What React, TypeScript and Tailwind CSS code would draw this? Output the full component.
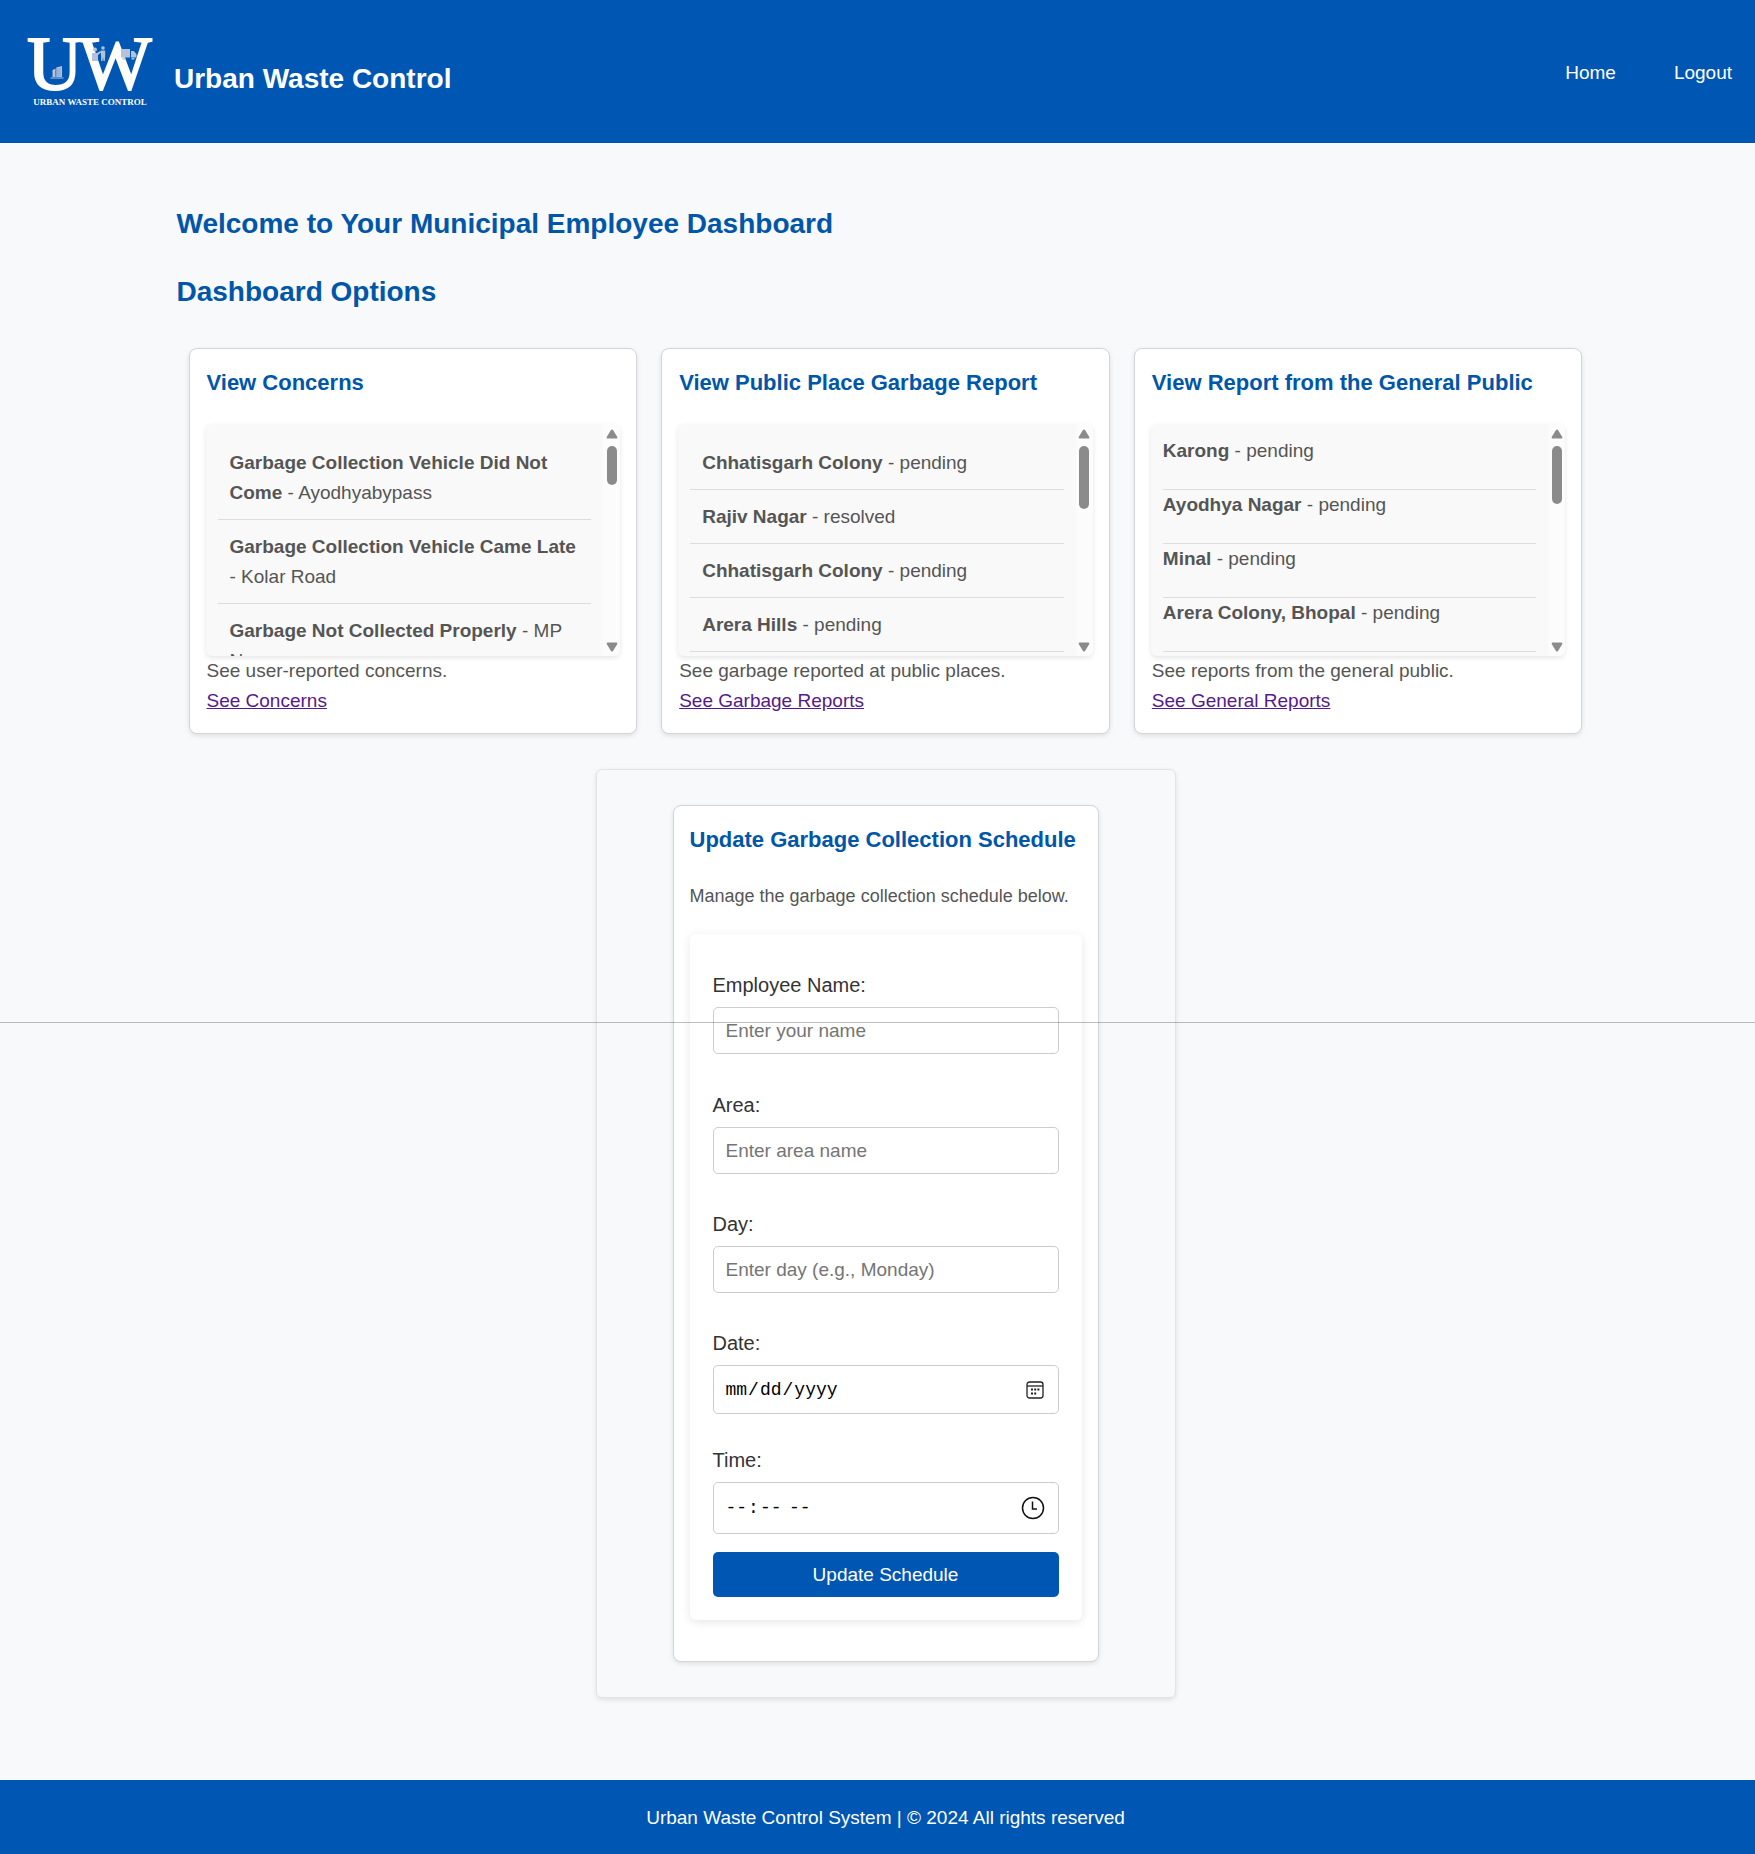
import React from "react";

type Item = { name: string; detail: string };

type Report = {
  title: string;
  items: Item[];
  inset: boolean;
  thumb: string;
  note: string;
  link: string;
};

const reports: Report[] = [
  {
    title: "View Concerns",
    items: [
      { name: "Garbage Collection Vehicle Did Not Come", detail: "Ayodhyabypass" },
      { name: "Garbage Collection Vehicle Came Late", detail: "Kolar Road" },
      { name: "Garbage Not Collected Properly", detail: "MP Nagar" },
    ],
    inset: true,
    thumb: "h-[39px]",
    note: "See user-reported concerns.",
    link: "See Concerns",
  },
  {
    title: "View Public Place Garbage Report",
    items: [
      { name: "Chhatisgarh Colony", detail: "pending" },
      { name: "Rajiv Nagar", detail: "resolved" },
      { name: "Chhatisgarh Colony", detail: "pending" },
      { name: "Arera Hills", detail: "pending" },
    ],
    inset: true,
    thumb: "h-[63px]",
    note: "See garbage reported at public places.",
    link: "See Garbage Reports",
  },
  {
    title: "View Report from the General Public",
    items: [
      { name: "Karong", detail: "pending" },
      { name: "Ayodhya Nagar", detail: "pending" },
      { name: "Minal", detail: "pending" },
      { name: "Arera Colony, Bhopal", detail: "pending" },
    ],
    inset: false,
    thumb: "h-[58px]",
    note: "See reports from the general public.",
    link: "See General Reports",
  },
];

function Logo() {
  return (
    <svg width="140" height="140" viewBox="0 0 140 140" role="img" aria-label="Urban Waste Control logo" className="shrink-0">
      <g fill="#fffdf8" stroke="#fffdf8" fontFamily="'Liberation Serif', serif">
        <text x="9" y="87" fontSize="77" strokeWidth="1.800">U</text>
        <text x="61" y="87" fontSize="77" strokeWidth="1.800">W</text>
        <text x="72" y="103" fontSize="9" strokeWidth="0" fontWeight="700" textAnchor="middle">
          URBAN WASTE CONTROL
        </text>
      </g>
      <g fill="#b4c3da">
        <path d="M34.500 68l3-1.500V75h-3zM38.300 65.500l5.700-1.500v11h-5.700zM32.500 75.400h13v1h-13z" />
        <path d="M40 66.500v8M42 66v8.500" stroke="#5f8cc8" strokeWidth="0.600" />
        <circle cx="77" cy="47.500" r="2" />
        <path d="M74 51h5l3.500-2 .8 1.200L80 53v6h-6z" />
        <circle cx="85" cy="46" r="1.800" />
        <path d="M82.800 48.500h4.400v5L86.800 59h-1.300l-.5-4-.5 4h-1.300z" />
        <path d="M103 47h9v8.500h-9zM113 49h2.800l2.700 3.300v3.200H113zM104.500 56h3v1.500h-3zM113.500 56h3v1.500h-3z" />
      </g>
    </svg>
  );
}

function ReportCard({ title, items, inset, thumb, note, link }: Report) {
  return (
    <article className="rounded-lg border border-[#d3d5d8] bg-white p-[17px] shadow-[0_2px_5px_rgba(0,0,0,0.1)]">
      <h3 className="mb-6 text-[22px] leading-[34px] font-bold text-[#0056a8]">{title}</h3>
      <div className="-mx-px flex h-[232px] overflow-hidden rounded-md bg-[#f9f9f9] shadow-[0_2px_5px_rgba(0,0,0,0.1)]">
        <ul className="min-w-0 flex-1 overflow-y-auto p-3 [scrollbar-width:none]">
          {items.map((item, i) => (
            <li
              key={i}
              className={inset ? "border-b border-[#dddddd] px-3 pt-3 pb-[11px]" : "border-b border-[#dddddd] pb-[23px]"}
            >
              <strong>{item.name}</strong> - {item.detail}
            </li>
          ))}
        </ul>
        <div aria-hidden="true" className="flex w-[17px] flex-col items-center bg-[#fcfcfc] pt-[5px] pb-1">
          <svg width="12" height="10" viewBox="0 0 12 10" fill="#8b8b8b">
            <path d="M6 0.500Q6.600 0.500 7 1L11.300 8Q11.600 9.500 10.500 9.500H1.500Q0.400 9.500 0.700 8L5 1Q5.400 0.500 6 0.500Z" />
          </svg>
          <div className={`mt-[7px] w-[10px] rounded-full bg-[#8b8b8b] ${thumb}`} />
          <svg width="12" height="10" viewBox="0 0 12 10" fill="#8b8b8b" className="mt-auto">
            <path d="M6 9.500Q6.600 9.500 7 9L11.300 2Q11.600 0.500 10.500 0.500H1.500Q0.400 0.500 0.700 2L5 9Q5.400 9.500 6 9.500Z" />
          </svg>
        </div>
      </div>
      <p>{note}</p>
      <a href="#" className="text-[#551a8b] underline">{link}</a>
    </article>
  );
}

const labelClass = "mb-[6px] block text-[20px] leading-8 text-[#333333]";
const inputClass =
  "block h-[47px] w-full rounded-[5px] border border-[#cccccc] bg-white px-3 text-[19px] placeholder:text-[#757575]";
const pickerClass =
  "block w-full rounded-[5px] border border-[#cccccc] bg-white px-[11px] font-['Liberation_Mono',monospace] text-[18px] text-black [&::-webkit-calendar-picker-indicator]:opacity-0";

export default function App() {
  return (
    <div className="relative flex min-h-screen flex-col overflow-x-hidden bg-[#f8f9fb] font-['Liberation_Sans',Arial,sans-serif] text-[19px] leading-[30px] text-[#555555]">
      <header className="flex h-[143px] items-center justify-between bg-[#0056b3] pr-[23px] pl-[18px] text-white">
        <div className="flex items-center gap-4">
          <Logo />
          <h1 className="pt-[14px] text-[28px] leading-10 font-bold">Urban Waste Control</h1>
        </div>
        <nav className="flex gap-[58px] pt-0.5">
          <a href="#">Home</a>
          <a href="#">Logout</a>
        </nav>
      </header>

      <main className="flex-1 pt-[58px] pb-[82px] pl-4">
        <div className="mx-auto w-full max-w-[1418px]">
          <h2 className="text-[28px] leading-[45px] font-bold text-[#0056a8]">Welcome to Your Municipal Employee Dashboard</h2>
          <h2 className="mt-[23px] text-[28px] leading-[45px] font-bold text-[#0056a8]">Dashboard Options</h2>

          <section className="mt-[34px] grid grid-cols-3 gap-6 px-3">
            {reports.map((report) => (
              <ReportCard key={report.title} {...report} />
            ))}
          </section>

          <section className="mx-auto mt-[35px] max-w-[580px] rounded-md border border-[#e1e3e6] px-[76px] py-[35px] shadow-[0_2px_5px_rgba(0,0,0,0.1)]">
            <div className="rounded-lg border border-[#d3d5d8] bg-white px-4 pt-[17px] pb-[41px] shadow-[0_2px_5px_rgba(0,0,0,0.1)]">
              <h3 className="text-[22px] leading-[34px] font-bold whitespace-nowrap text-[#0056a8]">
                Update Garbage Collection Schedule
              </h3>
              <p className="mt-6 text-[18px] leading-[30px]">Manage the garbage collection schedule below.</p>
              <form
                onSubmit={(e) => e.preventDefault()}
                className="mt-[23px] rounded-md bg-white px-[23px] pt-[35px] pb-[23px] shadow-[0_2px_10px_rgba(0,0,0,0.1)]"
              >
                <label htmlFor="employee" className={labelClass}>Employee Name:</label>
                <input id="employee" type="text" placeholder="Enter your name" className={inputClass} />

                <div className="mt-[35px]">
                  <label htmlFor="area" className={labelClass}>Area:</label>
                  <input id="area" type="text" placeholder="Enter area name" className={inputClass} />
                </div>

                <div className="mt-[34px]">
                  <label htmlFor="day" className={labelClass}>Day:</label>
                  <input id="day" type="text" placeholder="Enter day (e.g., Monday)" className={inputClass} />
                </div>

                <div className="mt-[34px]">
                  <label htmlFor="date" className={labelClass}>Date:</label>
                  <div className="relative">
                    <input id="date" type="date" className={`${pickerClass} h-[49px]`} />
                    <svg
                      aria-hidden="true"
                      width="18"
                      height="18"
                      viewBox="0 0 18 18"
                      className="pointer-events-none absolute top-4 right-[15px]"
                      fill="none"
                      stroke="#222222"
                      strokeWidth="1.300"
                    >
                      <rect x="1" y="1" width="16" height="16" rx="2.500" />
                      <path d="M1 5h16" />
                      <path d="M5 8.500h2M8.200 8.500h2M11.400 8.500h2M5 12.500h2M8.200 12.500h2" strokeWidth="2" />
                    </svg>
                  </div>
                </div>

                <div className="mt-[30px]">
                  <label htmlFor="time" className={labelClass}>Time:</label>
                  <div className="relative">
                    <input id="time" type="time" className={`${pickerClass} h-[52px]`} />
                    <svg
                      aria-hidden="true"
                      width="24"
                      height="24"
                      viewBox="0 0 24 24"
                      className="pointer-events-none absolute top-[14px] right-[14px]"
                      fill="none"
                      stroke="#111111"
                      strokeWidth="1.500"
                    >
                      <circle cx="12" cy="12" r="10.500" />
                      <path d="M11.500 5.500v7.500h4.500" />
                    </svg>
                  </div>
                </div>

                <button type="submit" className="mt-[18px] h-[45px] w-full rounded-[5px] bg-[#0056b3] text-[19px] text-white">
                  Update Schedule
                </button>
              </form>
            </div>
          </section>
        </div>
      </main>

      <footer className="bg-[#0056b3] py-[23px] pl-4 text-center leading-[30px] text-white">
        <p>Urban Waste Control System | © 2024 All rights reserved</p>
      </footer>

      <div aria-hidden="true" className="pointer-events-none absolute inset-x-0 top-[1022px] h-px bg-black/25" />
    </div>
  );
}
